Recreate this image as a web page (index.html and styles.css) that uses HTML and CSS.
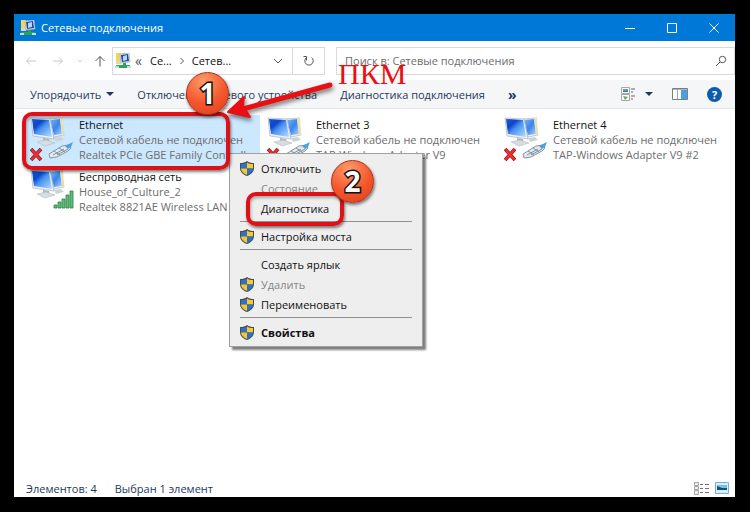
FILE: index.html
```html
<!DOCTYPE html>
<html lang="ru">
<head>
<meta charset="utf-8">
<title>Сетевые подключения</title>
<link rel="stylesheet" href="styles.css">
</head>
<body>
<svg class="defs" aria-hidden="true">
  <defs>
    <linearGradient id="screen" x1="0" y1="0" x2="1" y2="1">
      <stop offset="0" stop-color="#1c55d0"/><stop offset=".3" stop-color="#0b46cc"/><stop offset=".5" stop-color="#4a93f2"/><stop offset="1" stop-color="#b4e0ff"/>
    </linearGradient>
    <linearGradient id="screen-back" x1="0" y1="0" x2="1" y2="1">
      <stop offset="0" stop-color="#7db6f6"/><stop offset=".5" stop-color="#3c82ea"/><stop offset="1" stop-color="#a5d5ff"/>
    </linearGradient>
    <symbol id="monitors" viewBox="0 0 44 46">
      <path d="M19 2l12-1 3 17-10 2z" fill="#f1f3f4" stroke="#a9b4bb" stroke-width=".7"/>
      <path d="M20 3l10-1 2 15-8 1z" fill="url(#screen-back)"/>
      <path d="M30 1l3-1 1 18-2 1z" fill="#e6e0b4"/>
      <path d="M24 21l7-1 3 3-8 2z" fill="#cdd3d8"/>
      <path d="M1 1l19 1 4 20-21-3z" fill="#eef1f3" stroke="#a9b4bb" stroke-width=".7"/>
      <path d="M2 2l17 1 3 17-18-3z" fill="url(#screen)"/>
      <path d="M13 21l6 1 1 4-7-1z" fill="#aeb7be"/>
      <path d="M7 25l9-2 9 3-10 3z" fill="#d8dde1" stroke="#b2bac0" stroke-width=".6"/>
    </symbol>
    <symbol id="lan" viewBox="0 0 44 46">
      <use href="#monitors" width="44" height="46"/>
      <path d="M19 37l13-8 7-1 2 3-3 3-11 6-7 1z" fill="#e3e9ee" stroke="#8496a2" stroke-width="1"/>
      <path d="M23 38l11-6M27 38l11-6M24 34l6 4M29 31l6 4" fill="none" stroke="#8193a0" stroke-width="1"/>
      <path d="M35 29l8-4-2 5-3 2z" fill="#4ba1d9"/>
      <path d="M1 32l10 11M11 32l-10 11" stroke="#9d1518" stroke-width="3.600"/>
      <path d="M1.500 32.500l9 10M10.500 32.500l-9 10" stroke="#ed3135" stroke-width="2.200"/>
    </symbol>
    <symbol id="wifi" viewBox="0 0 44 46">
      <use href="#monitors" width="44" height="46"/>
      <g fill="#62bd78" stroke="#2a8043" stroke-width=".8">
        <path d="M24 36h3v3h-3zM28 33h3v6h-3zM32 30h3v9h-3zM36 26h3v13h-3zM40 22h3v17h-3z"/>
      </g>
    </symbol>
    <symbol id="net" viewBox="0 0 16 16">
      <path d="M1 0h5v9H1z" fill="#f1d65c"/>
      <path d="M1 8h5v3H1z" fill="#ddd7bb"/>
      <path d="M5 1l9-1 1 9-9 1z" fill="#e8ecef" stroke="#9ba7b5" stroke-width=".7"/>
      <path d="M6 2l7-1 1 7-7 1z" fill="#1b47a6"/>
      <path d="M8 3l4-1v5l-4 1z" fill="#b5d7f5"/>
      <path d="M8 10h3v2h4v3H1v-3h7z" fill="#2da558"/>
      <path d="M0 13h4v2H0zM12 13h4v2h-4z" fill="#bfe3c9"/>
    </symbol>
    <symbol id="shield" viewBox="0 0 14 15">
      <path d="M7 0c2 1.500 4 2 7 2v5c0 4-3 6.500-7 8-4-1.500-7-4-7-8V2c3 0 5-.5 7-2z" fill="#474d55"/>
      <path d="M7 1.500V7.500H1V3c2.500 0 4.500-.5 6-1.500z" fill="#2775c7"/>
      <path d="M7 1.500V7.500h6V3c-2.500 0-4.500-.5-6-1.500z" fill="#fdc52e"/>
      <path d="M1 7.500h6V14C3.500 12.500 1 10.500 1 7.500z" fill="#fdc52e"/>
      <path d="M13 7.500H7V14c3.500-1.500 6-3.500 6-6.500z" fill="#2775c7"/>
    </symbol>
  </defs>
</svg>

<main class="window">
  <header class="titlebar">
    <svg class="net-icon"><use href="#net"/></svg>
    <h1>Сетевые подключения</h1>
    <button class="caption" aria-label="Свернуть"><svg viewBox="0 0 12 12"><path d="M1 6.500h10"/></svg></button>
    <button class="caption" aria-label="Развернуть"><svg viewBox="0 0 12 12"><path d="M1.500 1.500h9v9h-9z"/></svg></button>
    <button class="caption" aria-label="Закрыть"><svg viewBox="0 0 12 12"><path d="M1.500 1.500l9 9M10.500 1.500l-9 9"/></svg></button>
  </header>

  <nav class="navbar">
    <div class="history">
      <button class="dim" aria-label="Назад"><svg viewBox="0 0 12 12"><path d="M11 6H1.500M5 2.500L1.500 6 5 9.500"/></svg></button>
      <button class="dim" aria-label="Вперед"><svg viewBox="0 0 12 12"><path d="M1 6h9.500M7 2.500L10.500 6 7 9.500"/></svg></button>
      <button class="dim recent" aria-label="Последние"><svg viewBox="0 0 12 12"><path d="M4 5l2 2 2-2"/></svg></button>
      <button class="up" aria-label="Вверх"><svg viewBox="0 0 12 12"><path d="M6 11.500V1.500M1.500 6L6 1.500 10.500 6"/></svg></button>
    </div>
    <div class="address">
      <svg class="net-icon"><use href="#net"/></svg>
      <span class="more">«</span>
      <a href="#">Се...</a>
      <svg class="crumb" viewBox="0 0 6 8"><path d="M1.500 1l3 3-3 3"/></svg>
      <a href="#">Сетев...</a>
      <button class="drop" aria-label="Журнал"><svg viewBox="0 0 12 12"><path d="M2 4l4 4 4-4"/></svg></button>
      <button class="refresh" aria-label="Обновить"><svg viewBox="0 0 12 12"><path d="M8.500 2.500A4.200 4.200 0 1 1 3.500 2.500M3.500 5.500v-4H.5"/></svg></button>
    </div>
    <form class="search">
      <input type="text" aria-label="Поиск" placeholder="Поиск в: Сетевые подключения">
      <svg viewBox="0 0 12 12"><circle cx="7.500" cy="4.500" r="3.200"/><path d="M5 7l-4 4"/></svg>
    </form>
  </nav>

  <div class="toolbar">
    <button class="organize">Упорядочить <i class="caret"></i></button>
    <button>Отключение сетевого устройства</button>
    <button>Диагностика подключения</button>
    <button class="overflow">»</button>
    <div class="views">
      <button class="view" aria-label="Вид">
        <svg viewBox="0 0 15 15" width="15" height="15"><path d="M.5.500h8v6h-8zM.5 7.500h8v6h-8z" fill="#fafafa" stroke="#a5a9a5"/><path d="M2 2h5v2H2z" fill="#52a0cd"/><path d="M2 4h5v1H2z" fill="#59715a"/><path d="M2 9l5 1-3 3z" fill="#71a36c"/><path d="M10 2h4M10 5h2M10 9h4M10 12h2" stroke="#5c6670"/></svg>
        <i class="caret"></i>
      </button>
      <button class="preview" aria-label="Область просмотра">
        <svg viewBox="0 0 16 12" width="16" height="12"><path d="M.5.500h15v11H.5z" fill="#fff" stroke="#777f87"/><path d="M1 1h14v1H1z" fill="#aab2b8"/><path d="M9 2h6v9H9z" fill="#49a0e4"/><path d="M5.500 2v9" stroke="#9ca7b0"/></svg>
      </button>
      <button class="help" aria-label="Справка">?</button>
    </div>
  </div>

  <section class="files">
    <article class="tile selected">
      <svg><use href="#lan"/></svg>
      <div><h2>Ethernet</h2><p>Сетевой кабель не подключен</p><p>Realtek PCIe GBE Family Controller</p></div>
    </article>
    <article class="tile">
      <svg><use href="#lan"/></svg>
      <div><h2>Ethernet 3</h2><p>Сетевой кабель не подключен</p><p>TAP-Windows Adapter V9</p></div>
    </article>
    <article class="tile">
      <svg><use href="#lan"/></svg>
      <div><h2>Ethernet 4</h2><p>Сетевой кабель не подключен</p><p>TAP-Windows Adapter V9 #2</p></div>
    </article>
    <article class="tile">
      <svg><use href="#wifi"/></svg>
      <div><h2>Беспроводная сеть</h2><p>House_of_Culture_2</p><p>Realtek 8821AE Wireless LAN 8...</p></div>
    </article>
  </section>

  <footer class="status">
    <span>Элементов: 4</span>
    <span>Выбран 1 элемент</span>
    <div class="modes">
      <button aria-label="Таблица"><svg viewBox="0 0 15 13" width="15" height="13"><path d="M.5.500h4v3h-4zM.5 4.500h4v3h-4zM.5 8.500h4v4h-4z" fill="#eee" stroke="#a5a5a5"/><path d="M6 2.500h3M11 2.500h4M6 6.500h3M11 6.500h4M6 10.500h3M11 10.500h4" stroke="#707078"/></svg></button>
      <button aria-label="Крупные значки"><svg viewBox="0 0 14 12" width="14" height="12"><path d="M.5.500h13v11H.5z" fill="#d4edfb" stroke="#7eaed0"/><path d="M2 3h10v5H2z" fill="#77c1e8"/><path d="M2 4l5 2h5v2H2z" fill="#17516f"/></svg></button>
    </div>
  </footer>

  <div class="menu" role="menu">
    <button role="menuitem"><svg><use href="#shield"/></svg>Отключить</button>
    <button role="menuitem" disabled>Состояние</button>
    <button role="menuitem">Диагностика</button>
    <hr>
    <button role="menuitem"><svg><use href="#shield"/></svg>Настройка моста</button>
    <hr>
    <button role="menuitem">Создать ярлык</button>
    <button role="menuitem" disabled><svg><use href="#shield"/></svg>Удалить</button>
    <button role="menuitem"><svg><use href="#shield"/></svg>Переименовать</button>
    <hr>
    <button role="menuitem" class="default"><svg><use href="#shield"/></svg>Свойства</button>
  </div>
</main>

<div class="mark frame-one"></div>
<div class="mark frame-two"></div>
<svg class="arrow" viewBox="0 0 108 42"><path d="M104 5L17 29" stroke="#e90f12" stroke-width="5" stroke-linecap="round"/><path d="M2 32L18 17l-1 9 7 11z" fill="#e90f12" stroke="#e90f12" stroke-width="2" stroke-linejoin="round"/></svg>
<div class="callout">ПКМ</div>
<div class="badge badge-one">1</div>
<div class="badge badge-two">2</div>
</body>
</html>
```
FILE: styles.css
```css
* { box-sizing: border-box; }

body {
  margin: 0;
  padding: 14px 15px 15px 14px;
  min-height: 100vh;
  display: flex;
  background: #000;
  color: #111;
  font: 11px/15px "Open Sans", "Noto Sans", sans-serif;
}

h1, h2, p { margin: 0; font-size: inherit; font-weight: 400; }

button {
  border: 0;
  padding: 0;
  background: none;
  color: inherit;
  font: inherit;
  display: flex;
  align-items: center;
  justify-content: center;
}

.defs { position: absolute; width: 0; height: 0; }

.window {
  flex: 1;
  min-width: 0;
  display: flex;
  flex-direction: column;
  background: #fff;
}

.net-icon { width: 16px; height: 16px; flex: none; }

.titlebar {
  display: flex;
  align-items: center;
  height: 27px;
  padding-left: 6px;
  background: #0078d7;
  color: #fff;
}
.titlebar h1 { flex: 1; margin-left: 5px; }
.caption { width: 42px; height: 27px; }
.caption svg { width: 12px; height: 12px; fill: none; stroke: #fff; stroke-width: 1; }

.navbar {
  display: flex;
  align-items: center;
  height: 39px;
}
.navbar svg:not(.net-icon) { flex: none; fill: none; stroke: #555; stroke-width: 1; }
.history { display: flex; width: 98px; padding-left: 6px; }
.history button { width: 27px; height: 20px; padding-right: 5px; }
.history svg { width: 12px; height: 12px; }
.history .recent { width: 20px; padding-right: 8px; }
.history .up { width: 12px; padding: 0; }
.navbar .dim svg { stroke: #c8c8c8; }

.address {
  display: flex;
  align-items: center;
  width: 213px;
  height: 28px;
  padding-left: 2px;
  border: 1px solid #d9d9d9;
}
.address a { color: #111; text-decoration: none; }
.more { margin: 0 8px 0 4px; font-size: 14px; color: #555; }
.crumb { width: 6px; height: 8px; margin: 0 7px 0 7px; }
.drop { width: 28px; margin-left: auto; }
.drop svg, .refresh svg { width: 12px; height: 12px; }
.refresh { width: 32px; height: 26px; border-left: 1px solid #d9d9d9; }

.search {
  flex: 1;
  display: flex;
  align-items: center;
  height: 28px;
  margin-left: 11px;
  padding: 0 7px 0 8px;
  border: 1px solid #d9d9d9;
}
.search input {
  flex: 1;
  min-width: 0;
  border: 0;
  padding: 0;
  outline: 0;
  font: inherit;
}
.search input::placeholder { color: #6d6d6d; opacity: 1; }
.search svg { width: 12px; height: 12px; }

.toolbar {
  display: flex;
  align-items: center;
  gap: 23px;
  height: 29px;
  padding: 0 13px 0 16px;
  background: #f5f6f7;
  border-bottom: 1px solid #e4e6e8;
  color: #1e395b;
}
.toolbar button { white-space: nowrap; }
.caret {
  border: 4px solid transparent;
  border-top-color: currentColor;
  border-bottom: 0;
}
.organize { gap: 5px; }
.overflow { font-size: 14px; font-weight: 700; }
.views { display: flex; align-items: center; gap: 19px; margin-left: auto; }
.view { gap: 9px; }
.toolbar .help {
  width: 15px;
  height: 15px;
  border-radius: 50%;
  background: #0c5cad;
  color: #fff;
  font-weight: 700;
}

.files {
  flex: 1;
  display: grid;
  grid-template-columns: repeat(auto-fill, 237px);
  grid-auto-rows: 52px;
  padding: 6px 0 0 9px;
}
.tile { display: flex; gap: 5px; padding: 2px 0 0 7px; white-space: nowrap; }
.tile > svg { width: 44px; height: 46px; flex: none; overflow: visible; }
.tile p { color: #6d6d6d; }
.selected { background: #cce8ff; }

.status {
  display: flex;
  align-items: center;
  height: 18px;
  padding: 0 6px 0 12px;
  gap: 18px;
  color: #1e395b;
}
.modes { display: flex; gap: 6px; margin-left: auto; }

.menu {
  position: absolute;
  left: 229px;
  top: 153px;
  width: 194px;
  padding: 4px 2px;
  border: 1px solid #a0a0a0;
  background: #eee;
  box-shadow: 3px 3px 2px rgba(0, 0, 0, .5);
}
.menu button {
  position: relative;
  justify-content: flex-start;
  width: 100%;
  height: 20px;
  padding-left: 29px;
}
.menu svg { position: absolute; left: 8px; width: 14px; height: 15px; }
.menu button:disabled { color: #858585; }
.menu hr { height: 1px; margin: 3px 8px 4px; border: 0; background: #919191; }
.menu .default { font-weight: 700; }

.mark {
  position: absolute;
  border: 4px solid #df1016;
  border-radius: 10px;
  box-shadow: 1px 2px 3px rgba(0, 0, 0, .5), inset 1px 2px 3px rgba(0, 0, 0, .3);
}
.frame-one { left: 22px; top: 112px; width: 208px; height: 58px; }
.frame-two { left: 246px; top: 192px; width: 98px; height: 34px; }

.arrow {
  position: absolute;
  left: 226px;
  top: 80px;
  width: 108px;
  height: 42px;
  fill: none;
  filter: drop-shadow(1px 3px 2px rgba(0, 0, 0, .5));
}

.callout {
  position: absolute;
  left: 338px;
  top: 59px;
  color: #e90f12;
  font: 30px/30px "Liberation Serif", serif;
}

.badge {
  position: absolute;
  width: 43px;
  height: 43px;
  border: 1px solid #a8321c;
  border-radius: 50%;
  background: radial-gradient(circle at 40% 20%, #ff9a68, #f4562c 55%, #dc3d1c);
  box-shadow: 1px 2px 3px rgba(0, 0, 0, .5);
  color: #fff;
  font: 700 28px/41px "Open Sans", sans-serif;
  text-align: center;
  -webkit-text-stroke: 3px #111;
  paint-order: stroke fill;
}
.badge-one { left: 186px; top: 72px; }
.badge-two { left: 331px; top: 160px; }
```
